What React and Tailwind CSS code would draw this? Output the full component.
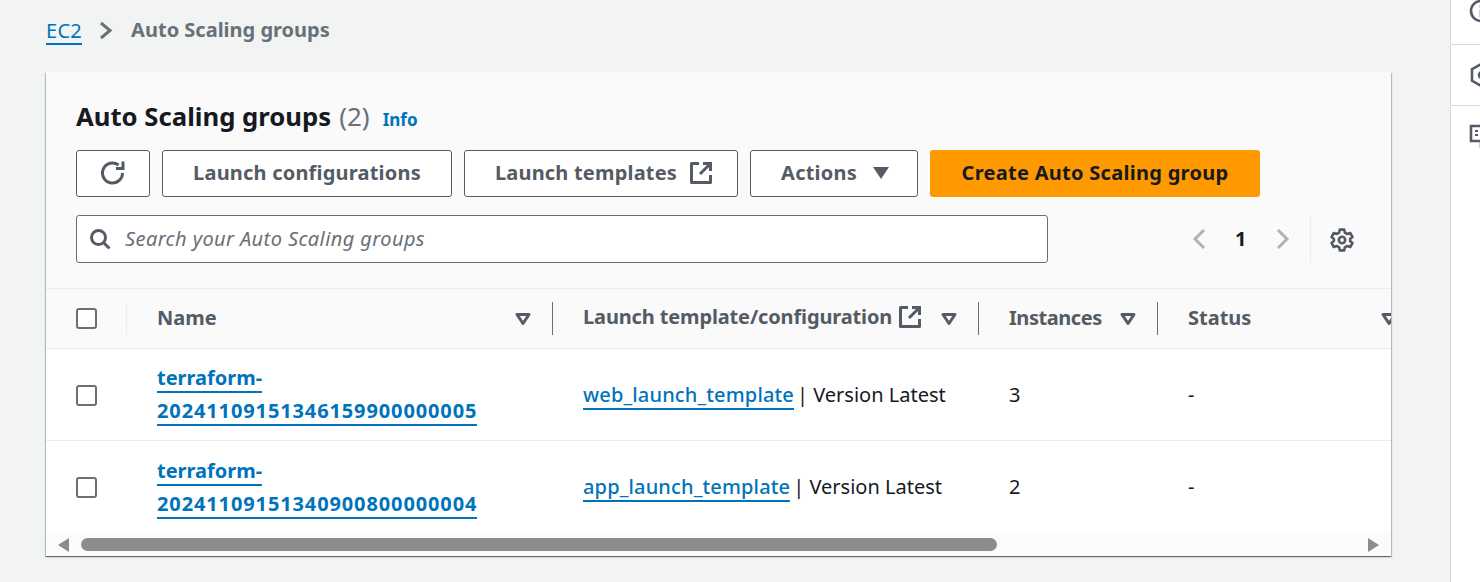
const font = { fontFamily: '"Noto Sans", sans-serif' };

function ExtLink({ size = 24, className = "" }) {
  return (
    <svg width={size} height={size} viewBox="0 0 24 24" fill="none" stroke="#545b64" strokeWidth="3" className={className}>
      <path d="M10 2.5H2.5v19h19V14" strokeLinejoin="round" />
      <path d="M14 2.5h7.5V10M21.5 2.5L11 13" />
    </svg>
  );
}

function SortCaret() {
  return (
    <svg width="16" height="14" viewBox="0 0 16 14" fill="none" stroke="#545b64" strokeWidth="3" className="shrink-0">
      <path d="M2 2.5h12L8 11.5z" strokeLinejoin="round" />
    </svg>
  );
}

function Check() {
  return <span className="block w-[21px] h-[21px] rounded-[3px] border-2 border-[#687078] bg-white" />;
}

function Btn({ w, extra = "", children }) {
  return (
    <button className={`${w} ${extra} h-[47px] pb-[2px] rounded-[3px] border border-[#545b64] bg-white flex items-center justify-center text-[20px] font-bold tracking-[0.2px] text-[#545b64]`}>
      {children}
    </button>
  );
}

function Head({ children, caret = true, divider = true, extra = "pb-[1px]", pl = "pl-[31px]" }) {
  return (
    <div className={`relative h-full flex items-center ${pl} pr-[21px]`}>
      <div className={`flex-1 flex items-center gap-[6px] text-[20px] font-bold text-[#545b64] whitespace-nowrap ${extra}`}>{children}</div>
      {caret && <SortCaret />}
      {divider && <span className="absolute -right-px top-[13px] h-[33px] w-px bg-[#687078]" />}
    </div>
  );
}

const cols = "grid grid-cols-[81px_425px_426px_179px_261px] w-[1372px]";

function Row({ id1, id2, tpl, n, last }) {
  return (
    <div className={`${cols} h-[92px] ${last ? "" : "border-b border-[#eaeded]"} text-[20px] text-[#16191f] bg-white`}>
      <div className="flex items-center pl-[30px] pt-[1px]"><Check /></div>
      <div className="flex flex-col justify-center pl-[30px] text-[#0073bb] font-bold">
        <span className="leading-[29px]"><a className="border-b-2 border-[#0073bb] inline-block leading-[27px]">{id1}</a></span>
        <span className="leading-[29px]"><a className="border-b-2 border-[#0073bb] inline-block leading-[27px] mt-[4px] tracking-[0.88px]">{id2}</a></span>
      </div>
      <div className="flex items-center pl-[31px] whitespace-nowrap">
        <a className="text-[#0073bb] font-medium tracking-[0.15px] border-b-2 border-[#0073bb] leading-[26px] mt-[2px]">{tpl}</a>
        <span className="ml-[3px]">| Version Latest</span>
      </div>
      <div className="flex items-center pl-[31px]">{n}</div>
      <div className="flex items-center pl-[31px]">-</div>
    </div>
  );
}

export default function App() {
  return (
    <div style={font} className="w-[1480px] h-[582px] overflow-hidden bg-[#f2f3f3] flex">
      <main className="w-[1450px] shrink-0 pl-[46px] pr-[59px]">
        <nav className="h-[72px] pb-[12px] flex items-center text-[20px]">
          <a className="text-[#0073bb] border-b-2 border-[#0073bb] leading-[25px] mt-[2px] tracking-[0.3px]">EC2</a>
          <svg width="16" height="20" viewBox="0 0 16 20" fill="none" stroke="#687078" strokeWidth="3" className="ml-[16px] mr-[17px]">
            <path d="M3 3l9 7.5L3 18" />
          </svg>
          <span className="font-bold text-[#687078]">Auto Scaling groups</span>
        </nav>

        <section className="w-[1345px] h-[484px] bg-white overflow-hidden flex flex-col shadow-[0_1px_1px_0_rgba(0,28,36,0.4),1px_1px_1px_0_rgba(0,28,36,0.2),-1px_1px_1px_0_rgba(0,28,36,0.2)]">
          <div className="h-[216px] shrink-0 bg-[#fafafa] px-[30px]">
            <div className="h-[78px] pt-[23px] flex items-baseline">
              <h1 className="text-[25.7px] leading-[44px] font-bold text-[#16191f]">Auto Scaling groups</h1>
              <span className="ml-[8px] text-[26px] text-[#687078]">(2)</span>
              <a className="ml-[13px] text-[17px] font-bold text-[#0073bb]">Info</a>
            </div>
            <div className="flex gap-[12px]">
              <Btn w="w-[74px]">
                <svg width="26" height="26" viewBox="0 0 26 26" fill="none" stroke="#545b64" strokeWidth="3">
                  <path d="M22.5 13A10 10 0 1 1 18.5 5" />
                  <path d="M23 1.5V8.5H16" />
                </svg>
              </Btn>
              <Btn w="w-[290px]">Launch configurations</Btn>
              <Btn w="w-[274px]" extra="pl-[6px]">Launch templates<ExtLink className="ml-[12px]" /></Btn>
              <Btn w="w-[168px]" extra="pl-[2px]">
                Actions
                <svg width="16" height="12" viewBox="0 0 16 12" fill="#545b64" className="ml-[16px]"><path d="M0 0h16L8 12z" /></svg>
              </Btn>
              <button className="w-[330px] h-[47px] pb-[2px] rounded-[3px] bg-[#ff9900] text-[20px] font-bold tracking-[0.28px] text-[#16191f]">Create Auto Scaling group</button>
            </div>
            <div className="mt-[18px] flex items-center">
              <div className="w-[972px] h-[48px] rounded-[3px] border border-[#687078] bg-white flex items-center pl-[12px] gap-[14px]">
                <svg width="22" height="22" viewBox="0 0 22 22" fill="none" stroke="#545b64" strokeWidth="3"><circle cx="9.5" cy="9.5" r="7" /><path d="M14.5 14.500l6 6" /></svg>
                <span className="text-[20px] italic text-[#687078] tracking-[0.4px]">Search your Auto Scaling groups</span>
              </div>
              <div className="ml-[144px] flex items-center">
                <svg width="14" height="22" viewBox="0 0 14 22" fill="none" stroke="#aab7b8" strokeWidth="3"><path d="M12 2L3 11l9 9" /></svg>
                <span className="ml-[29px] w-[12px] text-[20px] font-bold text-[#16191f]">1</span>
                <svg width="14" height="22" viewBox="0 0 14 22" fill="none" stroke="#aab7b8" strokeWidth="3" className="ml-[29px]"><path d="M2 2l9 9-9 9" /></svg>
                <span className="ml-[20px] w-px h-[47px] bg-[#eaeded]" />
                <svg width="24" height="24" viewBox="0 0 24 24" fill="none" stroke="#545b64" strokeWidth="2.6" strokeLinejoin="round" className="ml-[19px] mt-[1px]">
                  <circle cx="12" cy="12" r="3.2" />
                  <path d="M9.800 1.600h4.400l.6 3 2.500 1.400 2.900-1 2.200 3.900-2.300 2v2.200l2.300 2-2.200 3.900-2.900-1-2.500 1.400-.6 3H9.800l-.6-3-2.500-1.400-2.900 1-2.200-3.900 2.300-2V10.900l-2.300-2 2.200-3.900 2.900 1 2.500-1.400z" />
                </svg>
              </div>
            </div>
          </div>

          <div className="overflow-hidden">
            <div className={`${cols} h-[61px] bg-[#fafafa] border-t border-b border-[#eaeded]`}>
              <div className="relative flex items-center pl-[30px]">
                <Check />
                <span className="absolute right-0 top-[13px] h-[33px] w-px bg-[#eaeded]" />
              </div>
              <Head pl="pl-[30px]">Name</Head>
              <Head extra="pb-[3px] tracking-[-0.14px]">Launch template/configuration<ExtLink /></Head>
              <Head extra="pb-[1px] tracking-[-0.45px]">Instances</Head>
              <Head divider={false}>Status</Head>
            </div>
            <Row id1="terraform-" id2="20241109151346159900000005" tpl="web_launch_template" n="3" />
            <Row id1="terraform-" id2="20241109151340900800000004" tpl="app_launch_template" n="2" last />
          </div>

          <div className="flex-1 bg-[#fbfbfb] flex items-center pl-[12px] pr-[12px]">
            <svg width="11" height="14" viewBox="0 0 11 14" fill="#8c8c8c"><path d="M11 0v14L0 7z" /></svg>
            <div className="ml-[12px] w-[916px] h-[13px] rounded-full bg-[#8c8c8c]" />
            <svg width="11" height="14" viewBox="0 0 11 14" fill="#8c8c8c" className="ml-auto"><path d="M0 0v14l11-7z" /></svg>
          </div>
        </section>
      </main>

      <aside className="w-[30px] shrink-0 h-full bg-white border-l border-[#d5dbdb] overflow-hidden">
        <div className="h-[45px] border-b border-[#d5dbdb] pl-[18px] flex items-start">
          <svg width="24" height="24" viewBox="0 0 24 24" fill="none" stroke="#545b64" strokeWidth="2.6" className="shrink-0 -mt-[1px]">
            <circle cx="12" cy="12" r="10" /><path d="M12 11v7M12 6v2.500" />
          </svg>
        </div>
        <div className="h-[61px] border-b border-[#d5dbdb] pl-[19px] flex items-center">
          <svg width="24" height="26" viewBox="0 0 24 26" fill="none" stroke="#545b64" strokeWidth="2.6" className="shrink-0">
            <path d="M12 1.500l10 5.700v11.600l-10 5.700-10-5.700V7.200z" /><circle cx="12" cy="13" r="3" />
          </svg>
        </div>
        <div className="pl-[18px] pt-[18px]">
          <svg width="24" height="24" viewBox="0 0 24 24" fill="none" stroke="#545b64" strokeWidth="2.6">
            <path d="M2 2h20v15h-6l-4 5v-5H2z" />
            <path d="M6 7h3M11 7h3M6 11h3" strokeWidth="2" />
          </svg>
        </div>
      </aside>
    </div>
  );
}
